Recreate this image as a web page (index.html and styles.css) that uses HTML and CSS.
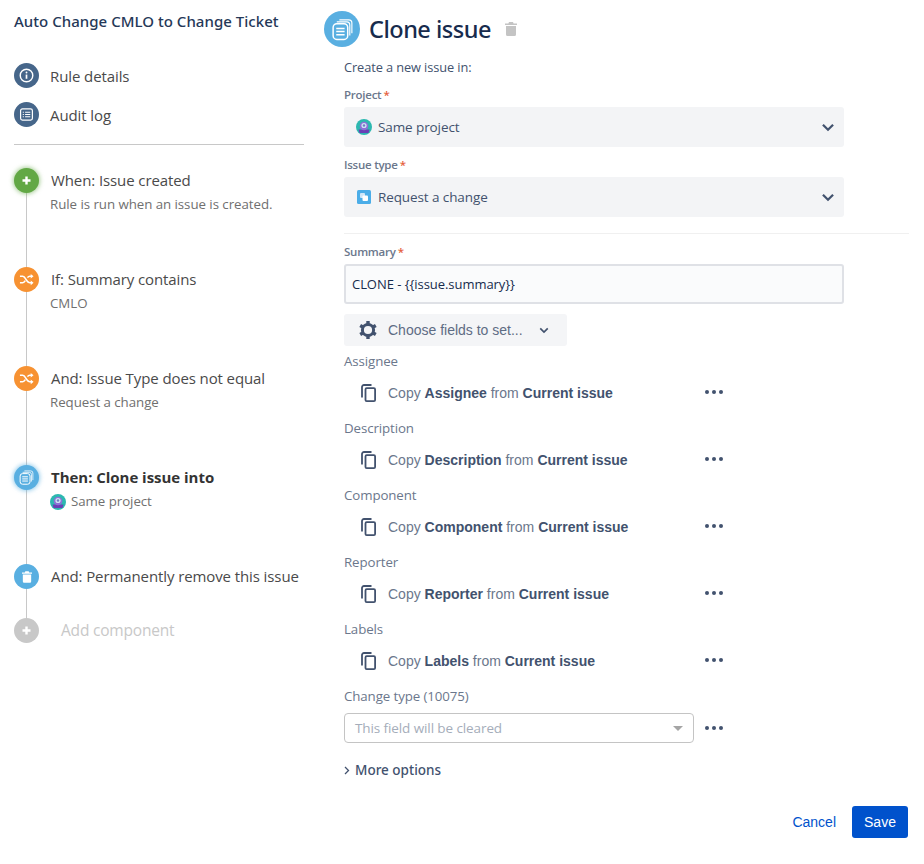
FILE: index.html
```html
<!DOCTYPE html>
<html lang="en">
<head>
<meta charset="utf-8">
<title>Clone issue</title>
<link rel="stylesheet" href="styles.css">
</head>
<body>
<svg class="defs" width="0" height="0">
  <symbol id="shuffle" viewBox="0 0 16 16"><path d="M1 4.500h3c3 0 4 7 7.500 7H14M1 11.500h3c1.300 0 2-1 2.700-2.200M9 6c.7-.9 1.400-1.500 2.500-1.500H14" fill="none" stroke="#fff" stroke-width="1.700"/><path d="M12.500 2l3 2.500-3 2.500zM12.500 9l3 2.500-3 2.500z" fill="#fff"/></symbol>
  <symbol id="pages" viewBox="0 0 24 24"><path d="M9 2.700h9a3 3 0 0 1 3 3v10" fill="none" stroke="#fff" stroke-width="1.100"/><path d="M6.500 4.700h9.500a3 3 0 0 1 3 3v10" fill="none" stroke="#fff" stroke-width="1.100"/><rect x="3" y="6.500" width="14" height="15" rx="3.500" fill="none" stroke="#fff" stroke-width="1.400"/><path d="M6 11h8M6 14h8M6 17h8" stroke="#fff" stroke-width="1.400"/></symbol>
  <symbol id="trash" viewBox="0 0 12 14"><path d="M4 0h4l.6 1.500H12V3H0V1.500h3.400zM1 4h10v8.500A1.500 1.500 0 0 1 9.500 14h-7A1.500 1.500 0 0 1 1 12.500z" fill="currentColor"/></symbol>
  <symbol id="copy" viewBox="0 0 15 18"><path d="M10.500 1H3a2 2 0 0 0-2 2v10.500" fill="none" stroke="#42526e" stroke-width="1.800"/><rect x="4.500" y="4.200" width="9.600" height="12.900" rx="1.200" fill="none" stroke="#42526e" stroke-width="1.800"/></symbol>
  <symbol id="chev" viewBox="0 0 12 8"><path d="M1.500 1.500L6 6l4.500-4.500" fill="none" stroke="#42526e" stroke-width="2"/></symbol>
  <symbol id="avatar" viewBox="0 0 16 16"><circle cx="8" cy="8" r="8" fill="#2cb8b0"/><path d="M2.500 10.500h11l-1 3.500h-9z" fill="#6a3fb5"/><circle cx="8" cy="7" r="4.300" fill="#8f6fd8"/><circle cx="8" cy="6.500" r="2.600" fill="#cfe3f5"/><circle cx="8" cy="6.500" r="1.200" fill="#6a7fc0"/></symbol>
</svg>
<div class="app">
  <aside class="side">
    <h2 class="rule-title">Auto Change CMLO to Change Ticket</h2>
    <nav class="nav">
      <div class="nav-item">
        <span class="nav-dot"><svg width="15" height="15" viewBox="0 0 16 16"><circle cx="8" cy="8" r="6.700" fill="none" stroke="#fff" stroke-width="1.500"/><path d="M8 7v4.500" stroke="#fff" stroke-width="1.800"/><circle cx="8" cy="4.800" r="1" fill="#fff"/></svg></span>
        <span>Rule details</span>
      </div>
      <div class="nav-item">
        <span class="nav-dot"><svg width="15" height="15" viewBox="0 0 16 16"><rect x="1.700" y="2" width="12.600" height="12" rx="2" fill="none" stroke="#fff" stroke-width="1.300"/><path d="M4 5.500h1.200M6.500 5.500h5.500M4 8h1.200M6.500 8h5.500M4 10.500h1.200M6.500 10.500h5.500" stroke="#fff" stroke-width="1.100"/></svg></span>
        <span>Audit log</span>
      </div>
    </nav>
    <ol class="timeline">
      <li class="step">
        <span class="dot green"><svg width="11" height="11" viewBox="0 0 11 11"><path d="M5.500 1.500v8M1.500 5.500h8" stroke="#fff" stroke-width="2.400"/></svg></span>
        <div><div class="step-name">When: Issue created</div><div class="step-sub">Rule is run when an issue is created.</div></div>
      </li>
      <li class="step">
        <span class="dot orange"><svg width="15" height="15"><use href="#shuffle"/></svg></span>
        <div><div class="step-name">If: Summary contains</div><div class="step-sub">CMLO</div></div>
      </li>
      <li class="step">
        <span class="dot orange"><svg width="15" height="15"><use href="#shuffle"/></svg></span>
        <div><div class="step-name">And: Issue Type does not equal</div><div class="step-sub">Request a change</div></div>
      </li>
      <li class="step">
        <span class="dot blue glow"><svg width="17" height="17"><use href="#pages"/></svg></span>
        <div><div class="step-name strong">Then: Clone issue into</div><div class="step-sub with-avatar"><svg width="16" height="16"><use href="#avatar"/></svg>Same project</div></div>
      </li>
      <li class="step short">
        <span class="dot blue white"><svg width="10" height="12"><use href="#trash"/></svg></span>
        <div><div class="step-name">And: Permanently remove this issue</div></div>
      </li>
      <li class="step last">
        <span class="dot grey"><svg width="11" height="11" viewBox="0 0 11 11"><path d="M5.500 1.500v8M1.500 5.500h8" stroke="#fff" stroke-width="2.400"/></svg></span>
        <div class="step-add">Add component</div>
      </li>
    </ol>
  </aside>
  <main class="main">
    <header class="head">
      <span class="head-icon"><svg width="25" height="25"><use href="#pages"/></svg></span>
      <h1 class="head-title">Clone issue</h1>
      <svg class="head-trash" width="12" height="14"><use href="#trash"/></svg>
    </header>
    <div class="form">
      <p class="intro">Create a new issue in:</p>
      <div class="req-label">Project<span class="star">*</span></div>
      <div class="select">
        <svg width="16" height="16"><use href="#avatar"/></svg>
        <span class="select-text">Same project</span>
        <svg class="select-chev" width="14" height="9"><use href="#chev"/></svg>
      </div>
      <div class="req-label second">Issue type<span class="star">*</span></div>
      <div class="select">
        <svg class="type-icon" width="14" height="14" viewBox="0 0 14 14"><rect width="14" height="14" rx="1.500" fill="#4bade8"/><rect x="3" y="3" width="5" height="5" rx="1" fill="#cfe6f8"/><rect x="5.500" y="5.500" width="5.500" height="5.500" rx="1" fill="#fff"/></svg>
        <span class="select-text">Request a change</span>
        <svg class="select-chev" width="14" height="9"><use href="#chev"/></svg>
      </div>
    </div>
    <hr class="rule">
    <div class="form">
      <div class="req-label">Summary<span class="star">*</span></div>
      <div class="text-input">CLONE - {{issue.summary}}</div>
      <div class="choose">
        <svg width="20" height="20" viewBox="0 0 20 20"><circle cx="10" cy="10" r="5.600" fill="none" stroke="#42526e" stroke-width="3"/><path d="M10 1v3M10 16v3M2.200 5.500l2.600 1.500M15.200 13l2.600 1.500M2.200 14.500l2.600-1.500M15.200 7l2.600-1.500" stroke="#42526e" stroke-width="3.400"/></svg>
        <span class="choose-text">Choose fields to set...</span>
        <svg class="choose-chev" width="10" height="7"><use href="#chev"/></svg>
      </div>
      <div class="field">
        <div class="field-label">Assignee</div>
        <div class="copy-row"><svg width="15" height="18"><use href="#copy"/></svg><span class="copy-text">Copy <b>Assignee</b> from <b>Current issue</b></span><span class="more"><i></i><i></i><i></i></span></div>
      </div>
      <div class="field">
        <div class="field-label">Description</div>
        <div class="copy-row"><svg width="15" height="18"><use href="#copy"/></svg><span class="copy-text">Copy <b>Description</b> from <b>Current issue</b></span><span class="more"><i></i><i></i><i></i></span></div>
      </div>
      <div class="field">
        <div class="field-label">Component</div>
        <div class="copy-row"><svg width="15" height="18"><use href="#copy"/></svg><span class="copy-text">Copy <b>Component</b> from <b>Current issue</b></span><span class="more"><i></i><i></i><i></i></span></div>
      </div>
      <div class="field">
        <div class="field-label">Reporter</div>
        <div class="copy-row"><svg width="15" height="18"><use href="#copy"/></svg><span class="copy-text">Copy <b>Reporter</b> from <b>Current issue</b></span><span class="more"><i></i><i></i><i></i></span></div>
      </div>
      <div class="field">
        <div class="field-label">Labels</div>
        <div class="copy-row"><svg width="15" height="18"><use href="#copy"/></svg><span class="copy-text">Copy <b>Labels</b> from <b>Current issue</b></span><span class="more"><i></i><i></i><i></i></span></div>
      </div>
      <div class="field-label change">Change type (10075)</div>
      <div class="clear-row">
        <div class="clear-select"><span>This field will be cleared</span><span class="caret"></span></div>
        <span class="more"><i></i><i></i><i></i></span>
      </div>
      <div class="more-options"><svg width="6" height="9" viewBox="0 0 6 9"><path d="M1 1l3.500 3.500L1 8" fill="none" stroke="#42526e" stroke-width="1.300"/></svg>More options</div>
    </div>
    <footer class="actions">
      <a class="cancel">Cancel</a>
      <button class="save">Save</button>
    </footer>
  </main>
</div>
</body>
</html>
```
FILE: styles.css
```css
* { box-sizing: border-box; }
html, body { margin: 0; padding: 0; background: #fff; }
body { font-family: "Open Sans", "Noto Sans", sans-serif; color: #42526e; width: 924px; height: 864px; overflow: hidden; }
.defs { position: absolute; }
.app { display: flex; }

.side { width: 290px; margin-left: 14px; flex: none; }
.rule-title { margin: 12px 0 0; font-family: "Noto Sans", sans-serif; font-size: 15px; line-height: 18px; font-weight: 500; color: #253858; letter-spacing: 0.03px; white-space: nowrap; }
.nav { margin-top: 33px; padding-bottom: 17px; border-bottom: 1px solid #c8c8c8; display: flex; flex-direction: column; gap: 14px; }
.nav-item { display: flex; align-items: center; gap: 11px; height: 25px; font-size: 15px; color: #4a4a4a; letter-spacing: -0.1px; }
.nav-dot { width: 25px; height: 25px; border-radius: 50%; background: #46668a; display: flex; align-items: center; justify-content: center; }

.timeline { list-style: none; margin: 23px 0 0; padding: 0; }
.step { position: relative; display: flex; gap: 12px; height: 99px; }
.step.short { height: 54px; }
.step.last { height: 30px; }
.step::before { content: ""; position: absolute; left: 12px; top: 0; bottom: 0; width: 1px; background: #c8c8c8; }
.step.last::before { bottom: 24px; }
.dot { position: relative; flex: none; width: 25px; height: 25px; border-radius: 50%; display: flex; align-items: center; justify-content: center; }
.green { background: #62a845; box-shadow: 0 0 4px 1px rgba(98,168,69,.55); }
.orange { background: #f79232; }
.blue { background: #59afe1; }
.glow { box-shadow: 0 0 4px 1px rgba(89,175,225,.6); }
.white { color: #fff; }
.grey { background: #c8c8c8; }
.step-name { font-size: 15px; line-height: 24px; color: #4a4a4a; letter-spacing: -0.1px; white-space: nowrap; }
.step-name.strong { font-weight: 700; color: #333; letter-spacing: -0.03px; }
.step-sub { margin-top: 0; margin-left: -1px; font-size: 13.300px; line-height: 25px; color: #707070; letter-spacing: -0.05px; white-space: nowrap; }
.with-avatar { display: flex; align-items: center; gap: 5px; }
.step-add { margin-left: 10px; font-size: 15.500px; line-height: 25px; color: #c8c8c8; letter-spacing: -0.2px; }

.main { margin-left: 20px; width: 590px; flex: none; }
.head { display: flex; align-items: center; height: 36px; margin-top: 11px; }
.head-icon { width: 36px; height: 36px; border-radius: 50%; background: #59afe1; display: flex; align-items: center; justify-content: center; }
.head-title { margin: 0 0 0 9px; font-family: "Noto Sans", sans-serif; font-size: 23.500px; line-height: 36px; font-weight: 500; color: #172b4d; letter-spacing: -0.5px; white-space: nowrap; }
.head-trash { margin-left: 14px; color: #c4c4c4; }
.form { margin-left: 20px; width: 500px; }
.intro { margin: 10px 0 0; font-size: 12.800px; line-height: 20px; color: #42526e; letter-spacing: -0.1px; }
.req-label { margin-top: 10px; font-size: 11.500px; line-height: 16px; font-weight: 600; color: #6b778c; letter-spacing: -0.25px; }
.req-label.second { margin-top: 10px; }
.star { color: #e5603c; margin-left: 2px; }
.select { margin-top: 4px; height: 40px; border-radius: 3px; background: #f3f4f6; display: flex; align-items: center; padding: 0 9px 0 12px; gap: 6px; font-size: 13.500px; color: #42526e; letter-spacing: -0.1px; }
.type-icon { margin: 0 1px; }
.select-text { flex: 1; }
.rule { margin: 16px 0 0 20px; width: 565px; height: 1px; border: 0; background: #f0f0f0; }
.form > .req-label:first-child { margin-top: 10px; }
.text-input { margin-top: 4px; height: 40px; border: 2px solid #dfe1e6; border-radius: 3px; background: #fafbfc; padding: 0 6px; line-height: 36px; font-size: 13px; color: #172b4d; letter-spacing: -0.05px; }
.choose { margin-top: 10px; width: 223px; height: 32px; background: #f4f5f7; border-radius: 3px; display: flex; align-items: center; padding-left: 14px; font-family: "Liberation Sans", Arial, sans-serif; font-size: 14px; color: #5e6c84; }
.choose-text { margin-left: 10px; }
.choose-chev { margin-left: 16px; }
.field { height: 67px; }
.field-label { font-size: 13.300px; line-height: 20px; color: #6b778c; letter-spacing: -0.1px; }
.choose + .field { margin-top: 5px; }
.copy-row { display: flex; align-items: center; height: 40px; margin-top: 2px; padding-left: 17px; font-family: "Liberation Sans", Arial, sans-serif; font-size: 14px; color: #6b778c; }
.copy-row b { color: #42526e; }
.copy-text { margin-left: 12px; width: 317px; white-space: nowrap; }
.more { display: inline-flex; gap: 3px; }
.copy-row .more { position: relative; top: -1px; }
.more i { width: 4px; height: 4px; border-radius: 50%; background: #42526e; }
.clear-row { display: flex; align-items: center; margin-top: 7px; gap: 11px; }
.clear-select { width: 350px; height: 30px; border: 1px solid #c4c4c4; border-radius: 4px; display: flex; align-items: center; justify-content: space-between; padding: 0 10px; font-size: 13.500px; color: #a5adba; letter-spacing: -0.1px; }
.caret { width: 0; height: 0; border-left: 5px solid transparent; border-right: 5px solid transparent; border-top: 5px solid #a5a5a5; }
.more-options { display: flex; align-items: center; gap: 5px; margin-top: 17px; font-family: "Noto Sans", sans-serif; font-size: 13.500px; line-height: 20px; font-weight: 500; color: #42526e; letter-spacing: 0; }
.actions { display: flex; align-items: center; justify-content: flex-end; gap: 16px; margin-top: 26px; padding-right: 6px; font-family: "Liberation Sans", Arial, sans-serif; font-size: 14px; }
.cancel { color: #0052cc; }
.save { width: 56px; height: 32px; border: 0; border-radius: 3px; background: #0052cc; color: #fff; font: inherit; }
```
